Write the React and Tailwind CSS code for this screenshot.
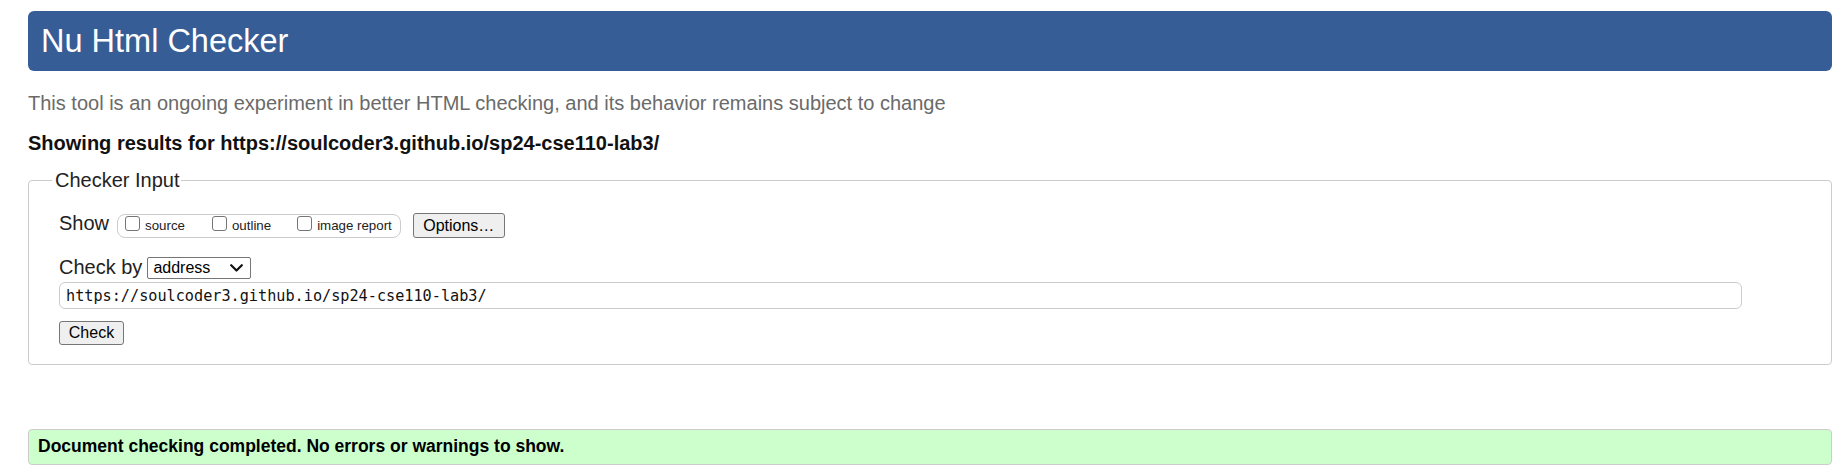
export default function App() {
  const Cb = () => (
    <span className="mt-[1px] w-[15px] h-[15px] shrink-0 rounded-[3px] border border-[#767676] bg-white" />
  );
  return (
    <div className="w-[1846px] h-[470px] bg-white pl-[28px] pt-[11px] font-[family-name:'Liberation_Sans',Arial,sans-serif] text-[#222]">
      <div className="w-[1804px]">
        <div className="h-[60px] rounded-[6px] bg-[#365d95] flex items-center pl-[13px]">
          <h1 className="text-[32.5px] leading-[37px] text-white">Nu Html Checker</h1>
        </div>
        <p className="mt-[21px] text-[20px] leading-[23px] text-[#6a6a6a]">
          This tool is an ongoing experiment in better HTML checking, and its behavior remains subject to change
        </p>
        <p className="mt-[17px] text-[20px] leading-[23px] font-bold text-[#111]">
          Showing results for https://soulcoder3.github.io/sp24-cse110-lab3/
        </p>
        <fieldset className="mt-[14px] border border-[#cccccc] rounded-[4px] pl-[23px]">
          <legend className="pl-[3px] pr-[1px] text-[20px] leading-[23px] text-[#222]">Checker Input</legend>
          <div className="pl-[7px] pt-[20px] pb-[19px]">
            <div className="flex items-start">
              <span className="text-[20px] leading-[23px]">Show</span>
              <div className="ml-[8px] mt-[2px] h-[24px] flex items-start rounded-[8px] border border-[#cccccc] pl-[7px] pr-[8px]">
                <Cb />
                <span className="ml-[5px] mt-[3px] text-[13.3px] leading-[16px]">source</span>
                <span className="ml-[27px] flex items-start">
                  <Cb />
                </span>
                <span className="ml-[5px] mt-[3px] text-[13.3px] leading-[16px]">outline</span>
                <span className="ml-[26px] flex items-start">
                  <Cb />
                </span>
                <span className="ml-[5px] mt-[3px] text-[13.3px] leading-[16px]">image report</span>
              </div>
              <button className="ml-[12px] mt-[1px] w-[92px] h-[25px] rounded-[3px] border border-[#767676] bg-[#efefef] text-[16px] leading-[20px] text-black">
                Options…
              </button>
            </div>
            <div className="mt-[18px] flex items-start">
              <span className="text-[20px] leading-[23px]">Check by</span>
              <div className="ml-[5px] mt-[1px] w-[104px] h-[22px] rounded-[2px] border border-[#767676] bg-white flex items-center justify-between pl-[5px] pr-[7px]">
                <span className="text-[16px] leading-[18px] text-black">address</span>
                <svg width="13" height="8" viewBox="0 0 13 8" fill="none">
                  <polyline points="1.2,1.2 6.5,6.5 11.8,1.2" stroke="#111" strokeWidth="2.2" strokeLinecap="round" strokeLinejoin="round" />
                </svg>
              </div>
            </div>
            <div className="mt-[3px] w-[1683px] h-[27px] rounded-[6px] border border-[#cccccc] bg-white flex items-center pl-[6px]">
              <span className="font-[family-name:'DejaVu_Sans_Mono',monospace] text-[15.2px] leading-[18px] text-[#111]">
                https://soulcoder3.github.io/sp24-cse110-lab3/
              </span>
            </div>
            <button className="mt-[12px] block w-[65px] h-[24px] rounded-[3px] border border-[#767676] bg-[#efefef] text-[16px] leading-[20px] text-black">
              Check
            </button>
          </div>
        </fieldset>
        <div className="mt-[64px] h-[36px] rounded-[4px] border border-[#cccccc] bg-[#ccffcc] flex items-center pl-[9px] pb-[2px]">
          <span className="text-[17.5px] leading-[20px] font-bold text-black">
            Document checking completed. No errors or warnings to show.
          </span>
        </div>
      </div>
    </div>
  );
}
